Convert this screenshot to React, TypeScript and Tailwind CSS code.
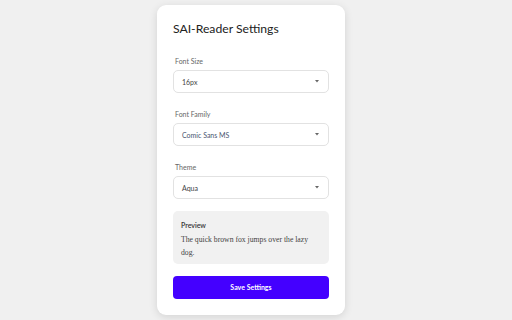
import React from "react";

function Select({ value, valueClass = "text-[#444]" }: { value: string; valueClass?: string }) {
  return (
    <div className="flex h-[23px] items-center justify-between rounded-[5px] border border-[#e2e2e2] bg-white pl-[8px] pr-[9px]">
      <span className={`text-[7px] leading-[10px] ${valueClass}`}>{value}</span>
      <svg width="4" height="3" viewBox="0 0 4 3" className="block">
        <path d="M0 0 L4 0 L2 2.5 Z" fill="#666" />
      </svg>
    </div>
  );
}

function Field({ label, value, valueClass }: { label: string; value: string; valueClass?: string }) {
  return (
    <div className="flex flex-col">
      <div className="pl-[2px] text-[7px] leading-[10px] text-[#666]">{label}</div>
      <div className="mt-[4px]">
        <Select value={value} valueClass={valueClass} />
      </div>
    </div>
  );
}

export default function App() {
  return (
    <div
      className="flex h-[320px] w-[512px] justify-center bg-[#f0f0f0] pr-[10px] pt-[5px]"
      style={{ fontFamily: 'Lato, "Noto Sans", sans-serif' }}
    >
      <div className="flex h-[310px] w-[188px] flex-col rounded-[9px] bg-white px-[16px] pt-[14px] shadow-[0_2px_8px_rgba(0,0,0,0.12)]">
        <h1 className="text-[12.2px] leading-[20px] text-[#222]">SAI-Reader Settings</h1>
        <div className="mt-[17px] flex flex-col gap-[16px]">
          <Field label="Font Size" value="16px" />
          <Field label="Font Family" value="Comic Sans MS" valueClass="text-[#4a5670]" />
          <Field label="Theme" value="Aqua" />
        </div>
        <div className="mt-[12px] h-[53px] rounded-[5px] bg-[#f1f1f1] px-[8px] pt-[9px]">
          <div className="text-[7px] font-semibold leading-[10px] text-[#333]">Preview</div>
          <p
            className="mt-[3px] text-[7.7px] leading-[13px] text-[#444]"
            style={{ fontFamily: '"Liberation Serif", serif' }}
          >
            The quick brown fox jumps over the lazy dog.
          </p>
        </div>
        <button className="mt-[12px] flex h-[23px] items-center justify-center rounded-[4px] bg-[#4400ff] text-[7px] font-bold text-white">
          Save Settings
        </button>
      </div>
    </div>
  );
}
